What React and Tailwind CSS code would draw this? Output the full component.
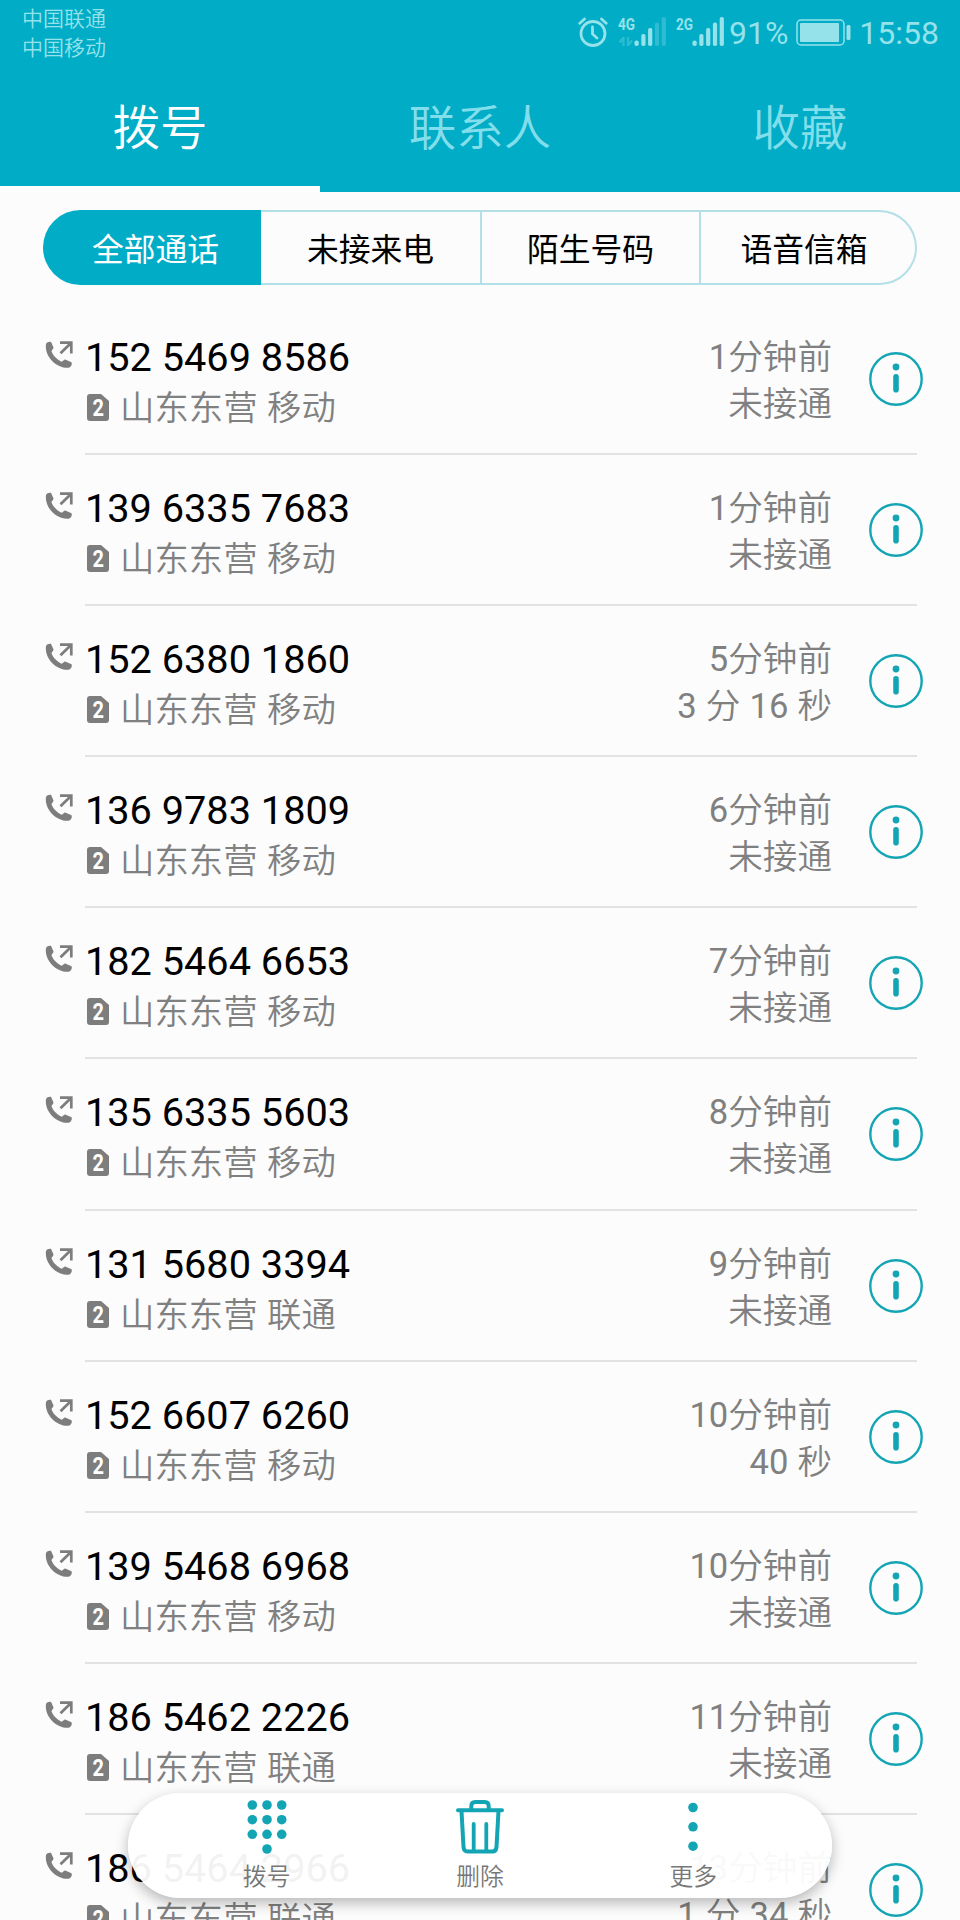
const FONT = "font-[Roboto,'Noto_Sans_CJK_SC_DemiLight','Noto_Sans_CJK_SC',sans-serif]"

const calls = [
  { number: '152 5469 8586', place: '山东东营 移动', time: '1分钟前', status: '未接通' },
  { number: '139 6335 7683', place: '山东东营 移动', time: '1分钟前', status: '未接通' },
  { number: '152 6380 1860', place: '山东东营 移动', time: '5分钟前', status: '3 分 16 秒' },
  { number: '136 9783 1809', place: '山东东营 移动', time: '6分钟前', status: '未接通' },
  { number: '182 5464 6653', place: '山东东营 移动', time: '7分钟前', status: '未接通' },
  { number: '135 6335 5603', place: '山东东营 移动', time: '8分钟前', status: '未接通' },
  { number: '131 5680 3394', place: '山东东营 联通', time: '9分钟前', status: '未接通' },
  { number: '152 6607 6260', place: '山东东营 移动', time: '10分钟前', status: '40 秒' },
  { number: '139 5468 6968', place: '山东东营 移动', time: '10分钟前', status: '未接通' },
  { number: '186 5462 2226', place: '山东东营 联通', time: '11分钟前', status: '未接通' },
  { number: '186 5464 2966', place: '山东东营 联通', time: '13分钟前', status: '1 分 34 秒' },
]

function AlarmIcon() {
  return (
    <svg width="30" height="30" viewBox="0 0 30 30" fill="none" stroke="currentColor" strokeWidth="2.8">
      <circle cx="15" cy="16.5" r="12" />
      <path d="M14.5 10v7l4.5 4" strokeLinecap="round" strokeLinejoin="round" />
      <path d="M1.8 6.2 6.5 2M28.2 6.2 23.5 2" strokeLinecap="round" />
    </svg>
  )
}

function Signal({ label, strength, arrows }) {
  return (
    <svg width="49" height="30" viewBox="0 0 49 30" fill="currentColor" className="overflow-visible">
      <text x="0" y="13" fontSize="17" fontWeight="700" textLength="17" lengthAdjust="spacingAndGlyphs">
        {label}
      </text>
      {arrows && (
        <path
          d="M5.5 20v9M5.5 20.5l-4 5M10 20v9M10 28.5l4-5"
          fill="none"
          stroke="currentColor"
          strokeWidth="2.2"
          opacity=".3"
        />
      )}
      {[5.5, 12, 18, 23.5, 29].map((h, i) => (
        <rect key={h} x={16.5 + i * 6.8} y={29 - h} width="4.2" height={h} rx="1.8" opacity={i < strength ? 1 : 0.3} />
      ))}
    </svg>
  )
}

function BatteryIcon() {
  return (
    <svg width="55" height="27" viewBox="0 0 55 27">
      <rect x="1" y="1" width="47" height="25" rx="4" fill="none" stroke="currentColor" strokeWidth="1.5" />
      <rect x="4" y="4" width="39" height="19" rx="1" fill="currentColor" />
      <rect x="50.5" y="6" width="4" height="15" rx="1.5" fill="currentColor" />
    </svg>
  )
}

function OutgoingIcon() {
  return (
    <svg width="28" height="28" viewBox="0 0 28 28" className="text-[#7d7d7d]">
      <path
        d="M1 3C2 1 4 .4 6 .8L8.5 6.5C8.7 7.5 6.8 8.8 6.5 10.2C8 14.5 12 18.5 16.5 20.7C18 20.5 19 18.5 20.2 18.6L26.5 21.3C27.5 23.5 26 26 23.5 26.8C11 27.5-.8 15 1 3Z"
        fill="currentColor"
      />
      <path d="M15 1.7H26.3V12.5M26 2 15.5 12.3" fill="none" stroke="currentColor" strokeWidth="2.7" />
    </svg>
  )
}

function SimBadge() {
  return (
    <svg width="22" height="27" viewBox="0 0 22 27" className="shrink-0 overflow-visible">
      <path d="M3 0H14L22 7V24Q22 27 19 27H3Q0 27 0 24V3Q0 0 3 0Z" fill="#7d7d7d" />
      <text x="5.6" y="21.8" fontSize="23" fontWeight="700" textLength="11.5" lengthAdjust="spacingAndGlyphs" fill="#fff">
        2
      </text>
    </svg>
  )
}

function InfoIcon() {
  return (
    <svg width="54" height="54" viewBox="0 0 54 54" className="text-[#14a5b5]">
      <circle cx="27" cy="27" r="25.7" fill="none" stroke="currentColor" strokeWidth="2.4" />
      <circle cx="27" cy="15" r="3.4" fill="currentColor" />
      <rect x="24.2" y="22" width="5.6" height="18.5" rx="2.8" fill="currentColor" />
    </svg>
  )
}

function DialpadIcon() {
  return (
    <svg width="54" height="54" viewBox="0 0 54 54" fill="currentColor">
      {[5, 19.7, 34.3].map((y) =>
        [12.3, 27, 41.7].map((x) => <circle key={`${x}-${y}`} cx={x} cy={y} r="4.8" />)
      )}
      <circle cx="27" cy="49" r="4.8" />
    </svg>
  )
}

function TrashIcon() {
  return (
    <svg width="54" height="54" viewBox="0 0 54 54" fill="none" stroke="currentColor" strokeWidth="4" strokeLinecap="round">
      <path d="M5 10.3H49M18.3 10V6Q18.3 2 22.3 2H31.7Q35.7 2 35.7 6V10" />
      <path d="M8.5 11 10.5 47Q10.8 51.5 14.5 51.5H39.5Q43.2 51.5 43.5 47L45.5 11" />
      <path d="M20.7 24V50M33.3 24V50" strokeWidth="3.8" />
    </svg>
  )
}

function MoreIcon() {
  return (
    <svg width="54" height="54" viewBox="0 0 54 54" fill="currentColor">
      <circle cx="27" cy="7.5" r="4.8" />
      <circle cx="27" cy="26.8" r="4.8" />
      <circle cx="27" cy="46.2" r="4.8" />
    </svg>
  )
}

function CallRow({ call }) {
  return (
    <div className="flex h-[151.1px] shrink-0 pl-[45px]">
      <div className="w-[40px] shrink-0 pt-[37px]">
        <OutgoingIcon />
      </div>
      <div className="mr-[43px] flex flex-1 justify-between border-b-2 border-[#e2e2e2]">
        <div className="pt-[29px]">
          <p className="text-[39.7px] leading-[50px] text-black">{call.number}</p>
          <div className="flex items-start pl-[2px] text-[#808080]">
            <div className="pt-[11px]">
              <SimBadge />
            </div>
            <p className="pl-[11px] text-[34.4px] leading-[50px] [word-spacing:1px]">{call.place}</p>
          </div>
        </div>
        <div className="-mr-[6px] flex">
          <div className="pt-[30px] pr-[37px] text-right text-[34.6px] leading-[47px] [word-spacing:0.5px] text-[#808080]">
            <p>{call.time}</p>
            <p>{call.status}</p>
          </div>
          <div className="pt-[48px]">
            <InfoIcon />
          </div>
        </div>
      </div>
    </div>
  )
}

export default function App() {
  return (
    <div className={`relative flex h-[1920px] w-[960px] flex-col overflow-hidden bg-[#fcfcfc] ${FONT}`}>
      <header className="h-48 shrink-0 bg-[#00acc6]">
        <div className="flex h-[66px] items-start justify-between pr-[21px] pl-[22px] text-[#95e2ea]">
          <div className="pt-[5px] text-[21px] leading-[29px]">
            <p>中国联通</p>
            <p>中国移动</p>
          </div>
          <div className="flex items-start pt-[17px]">
            <AlarmIcon />
            <div className="ml-[10px]">
              <Signal label="4G" strength={3} arrows />
            </div>
            <div className="ml-[9px]">
              <Signal label="2G" strength={5} />
            </div>
            <span className="ml-[4px] text-[32px] leading-[33px]">91%</span>
            <div className="ml-2 pt-[2px]">
              <BatteryIcon />
            </div>
            <span className="ml-[8px] text-[32px] leading-[33px]">15:58</span>
          </div>
        </div>
        <nav className="flex h-[126px] text-center text-[47.5px] leading-[126px] text-[#82deea]">
          <div className="flex-1 border-b-[6px] border-white text-white">拨号</div>
          <div className="flex-1">联系人</div>
          <div className="flex-1">收藏</div>
        </nav>
      </header>

      <div className="mt-[18px] ml-[43px] flex h-[75px] w-[874px] shrink-0 text-center font-['Noto_Sans_CJK_SC',sans-serif] text-[31.8px] leading-[71px] text-black">
        <div className="w-[218px] rounded-l-full bg-[#00acc6] pt-[2px] pl-[7px] text-white">全部通话</div>
        <div className="w-[221px] border-y-2 border-r-2 border-[#b2e0e6]">未接来电</div>
        <div className="w-[219px] border-y-2 border-r-2 border-[#b2e0e6]">陌生号码</div>
        <div className="flex-1 rounded-r-full border-y-2 border-r-2 border-[#b2e0e6] pr-2">语音信箱</div>
      </div>

      <main className="mt-[19px] flex flex-col">
        {calls.map((call) => (
          <CallRow key={call.number} call={call} />
        ))}
      </main>

      <div className="absolute top-[1793px] left-32 flex h-[105px] w-[704px] rounded-full bg-white/95 px-8 text-[#14a5b5] shadow-[0_5px_14px_rgba(0,0,0,0.28)]">
        {[
          { label: '拨号', Icon: DialpadIcon },
          { label: '删除', Icon: TrashIcon },
          { label: '更多', Icon: MoreIcon },
        ].map(({ label, Icon }) => (
          <div key={label} className="flex flex-1 flex-col items-center pt-[7px]">
            <Icon />
            <span className="pt-[6px] text-[23.8px] leading-[34px] text-[#777]">{label}</span>
          </div>
        ))}
      </div>
    </div>
  )
}
